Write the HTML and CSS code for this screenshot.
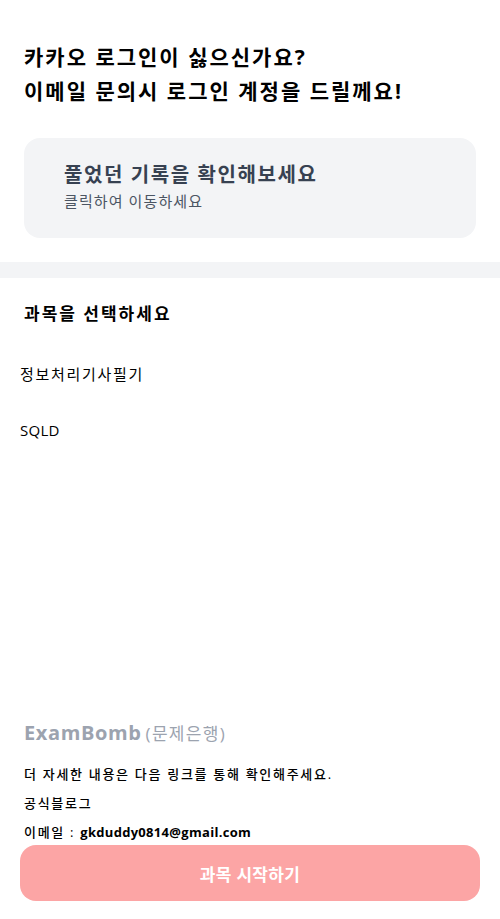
FILE: index.html
```html
<!DOCTYPE html>
<html lang="ko">
<head>
<meta charset="utf-8">
<title>ExamBomb</title>
<link rel="stylesheet" href="styles.css">
</head>
<body>
<div class="page">
  <header class="intro">
    <h1 class="intro-title">카카오 로그인이 싫으신가요?<br>이메일 문의시 로그인 계정을 드릴께요!</h1>
  </header>
  <a class="history-card" href="#">
    <span class="history-title">풀었던 기록을 확인해보세요</span>
    <span class="history-sub">클릭하여 이동하세요</span>
  </a>
  <div class="divider"></div>
  <section class="subjects">
    <h2 class="subjects-title">과목을 선택하세요</h2>
    <ul class="subject-list">
      <li class="subject-item">정보처리기사필기</li>
      <li class="subject-item subject-latin">SQLD</li>
    </ul>
  </section>
  <footer class="footer">
    <div class="brand"><span class="brand-name">ExamBomb</span> <span class="brand-sub">(문제은행)</span></div>
    <p class="footer-line footer-first">더 자세한 내용은 다음 링크를 통해 확인해주세요.</p>
    <p class="footer-line">공식블로그</p>
    <p class="footer-line">이메일 : <b class="email">gkduddy0814@gmail.com</b></p>
  </footer>
  <button class="start-btn" type="button">과목 시작하기</button>
</div>
</body>
</html>
```

FILE: styles.css
```css
* { box-sizing: border-box; }
html, body { margin: 0; padding: 0; background: #fff; }
body {
  font-family: "Open Sans", "Noto Sans CJK KR", sans-serif;
  color: #000;
}
.page {
  width: 500px;
  min-height: 919px;
  display: flex;
  flex-direction: column;
}
.intro { padding: 40px 24px 0; }
.intro-title {
  margin: 0;
  font-size: 21px;
  line-height: 34px;
  font-weight: 700;
  letter-spacing: 2px;
}
.history-card {
  margin: 30px 24px 0;
  height: 100px;
  border-radius: 16px;
  background: #f3f4f6;
  padding: 21px 40px 0;
  display: flex;
  flex-direction: column;
  text-decoration: none;
}
.history-title {
  font-size: 20px;
  line-height: 32px;
  font-weight: 700;
  color: #374151;
  letter-spacing: 1.6px;
}
.history-sub {
  font-size: 15px;
  line-height: 20px;
  color: #4b5563;
  letter-spacing: 1.1px;
}
.divider {
  margin-top: 24px;
  height: 16px;
  background: #f3f4f6;
}
.subjects { flex: 1; }
.subjects-title {
  margin: 0;
  padding: 22px 24px 0;
  font-size: 17px;
  line-height: 28px;
  font-weight: 700;
  letter-spacing: 2px;
}
.subject-list {
  list-style: none;
  margin: 0;
  padding: 18px 0 0 20px;
}
.subject-item {
  font-size: 15px;
  line-height: 56px;
  letter-spacing: 1.7px;
}
.subject-latin { letter-spacing: 0.3px; }
.footer { padding: 0 24px; }
.brand { line-height: 30px; }
.brand-name {
  font-size: 20px;
  font-weight: 700;
  color: #9ca3af;
  letter-spacing: 0.6px;
}
.brand-sub {
  font-size: 17px;
  color: #9ca3af;
  letter-spacing: 1.3px;
}
.footer-line {
  margin: 10px 0 0;
  font-size: 13px;
  line-height: 19px;
  font-weight: 500;
  letter-spacing: 1.7px;
}
.footer-first { margin-top: 16px; }
.email { font-weight: 700; letter-spacing: 0.3px; }
.start-btn {
  margin: 3px 20px 18px;
  height: 56px;
  border: none;
  border-radius: 16px;
  background: #fca5a5;
  color: #fff;
  font-family: inherit;
  font-size: 17px;
  font-weight: 700;
  letter-spacing: 0.3px;
}
```
